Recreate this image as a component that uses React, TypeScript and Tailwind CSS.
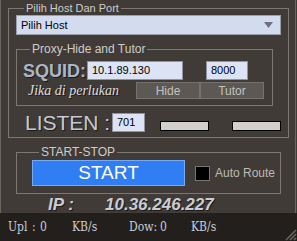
import React from 'react';

const sans = { fontFamily: '"Liberation Sans", Arial, sans-serif' };

const Input = ({ value, className = '' }: { value: string; className?: string }) => (
  <div
    className={`bg-[#dce3f5] border border-[#8e94a4] text-black text-[11px] flex items-center pl-[4px] ${className}`}
  >
    {value}
  </div>
);

const Stat = ({ w, children }: { w: string; children: React.ReactNode }) => (
  <span className={`${w} shrink-0`}>{children}</span>
);

export default function App() {
  return (
    <div className="w-[297px] h-[241px] bg-[#403b37] flex flex-col overflow-hidden" style={sans}>
      <div className="h-[213px] w-[296px] border-l border-r border-[#6c6661] shrink-0">
        {/* Pilih Host Dan Port */}
        <fieldset className="ml-[7px] mt-[1px] w-[281px] h-[137px] border border-[#7d7772] pl-[7px]">
          <legend className="ml-[8px] px-[2px] text-[11px] leading-[14px] text-[#cfcbc7]">
            Pilih Host Dan Port
          </legend>
          <div className="w-[265px] h-[20px] bg-[#d3dbee] border border-[#9a9fae] flex items-center justify-between pl-[4px] pr-[7px] text-[11px] text-black">
            <span>Pilih Host</span>
            <svg width="9" height="6" viewBox="0 0 9 6">
              <path d="M0 0 H9 L4.5 6 Z" fill="#6e7080" />
            </svg>
          </div>

          {/* Proxy-Hide and Tutor */}
          <fieldset className="mt-[7px] w-[257px] h-[64px] border border-[#7d7772] pl-[6px]">
            <legend className="ml-[7px] px-[2px] text-[12px] leading-[14px] text-[#cfcbc7]">
              Proxy-Hide and Tutor
            </legend>
            <div className="flex items-center h-[19px] mt-[5px]">
              <span className="w-[64px] text-[18px] font-bold text-[#aab6c6] leading-none [text-shadow:1px_1px_0_#1c1a18]">
                SQUID:
              </span>
              <Input value="10.1.89.130" className="w-[96px] h-[19px]" />
              <Input value="8000" className="ml-[23px] w-[42px] h-[19px]" />
            </div>
            <div className="flex items-center h-[17px] mt-[2px]">
              <span
                className="w-[113px] pl-[5px] italic text-[14px] text-[#dcdcdc] [text-shadow:1px_1px_0_#1c1a18]"
                style={{ fontFamily: '"Liberation Serif", serif' }}
              >
                Jika di perlukan
              </span>
              <div className="w-[64px] h-[17px] bg-[#5c5854] border border-[#77726d] text-[12px] text-[#c4c2c0] flex items-center justify-center">
                Hide
              </div>
              <div className="w-[64px] h-[17px] bg-[#5c5854] border border-[#77726d] text-[12px] text-[#c4c2c0] flex items-center justify-center">
                Tutor
              </div>
            </div>
          </fieldset>

          {/* LISTEN */}
          <div className="flex items-start mt-[7px] h-[19px]">
            <span className="w-[96px] pl-[9px] text-[21px] leading-[19px] text-[#c6cad3] [text-shadow:1px_1px_0_#1c1a18]">
              LISTEN :
            </span>
            <Input value="701" className="w-[33px] h-[19px]" />
            <div className="ml-[15px] mt-[8px] w-[49px] h-[10px] bg-[#d2cfcb] border border-black" />
            <div className="ml-[23px] mt-[8px] w-[49px] h-[10px] bg-[#d2cfcb] border border-black" />
          </div>
        </fieldset>

        {/* START-STOP */}
        <fieldset className="ml-[15px] mt-[7px] w-[265px] h-[49px] border border-[#7d7772] pl-[15px]">
          <legend className="ml-[7px] px-[2px] text-[12px] leading-[14px] text-[#cfcbc7]">START-STOP</legend>
          <div className="flex items-center mt-[1px] h-[26px]">
            <div className="w-[153px] h-[26px] bg-[#2f7ef4] border border-[#78aaf2] text-white text-[19px] flex items-center justify-center">
              START
            </div>
            <div className="ml-[10px] w-[15px] h-[15px] bg-black border border-[#7a7570]" />
            <span className="ml-[5px] text-[12px] text-[#bdbab6]">Auto Route</span>
          </div>
        </fieldset>

        {/* IP */}
        <div className="flex items-center h-[17px] mt-[2px] text-[17px] font-bold italic text-[#c9ccd3] [text-shadow:1px_1px_0_#1c1a18]">
          <span className="pl-[47px] w-[104px]">IP :</span>
          <span>10.36.246.227</span>
        </div>
      </div>

      {/* status bar */}
      <div
        className="relative flex-1 bg-[#231f1d] flex items-center pl-[8px] pb-[1px] text-[12px] text-[#c9cdd8]"
        style={{ fontFamily: '"DejaVu Serif Condensed", "Liberation Serif", serif' }}
      >
        <Stat w="w-[24px]">Upl</Stat>
        <Stat w="w-[8px]">:</Stat>
        <Stat w="w-[32px]">0</Stat>
        <Stat w="w-[57px]">KB/s</Stat>
        <Stat w="w-[31px]">Dow:</Stat>
        <Stat w="w-[31px]">0</Stat>
        <Stat w="w-[40px]">KB/s</Stat>
        <svg className="absolute right-0 bottom-0" width="13" height="13" viewBox="0 0 13 13">
          <path d="M12 2 L2 12 M12 6 L6 12 M12 10 L10 12" stroke="#6a6560" strokeWidth="1.5" />
        </svg>
      </div>
    </div>
  );
}
